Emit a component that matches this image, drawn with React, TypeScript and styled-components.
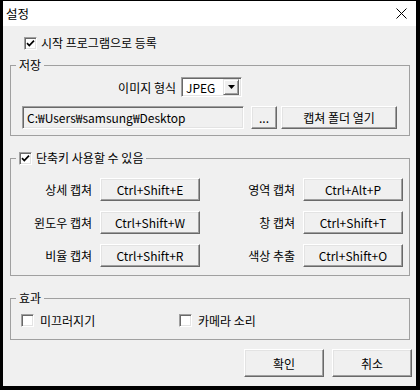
import React from 'react';
import styled, { createGlobalStyle } from 'styled-components';

const GlobalStyle = createGlobalStyle`
  html, body {
    margin: 0;
    padding: 0;
    background: #000;
  }
  body {
    font-family: "Noto Sans CJK KR", "Noto Sans", sans-serif;
    font-size: 12px;
    color: #000;
  }
  * {
    box-sizing: border-box;
  }
`;

const Window = styled.div`
  width: 420px;
  height: 390px;
  display: flex;
  flex-direction: column;
  background: #f0f0f0;
  border-style: solid;
  border-color: #000;
  border-width: 1px 4px 4px 3px;
`;

const TitleBar = styled.div`
  height: 25px;
  flex-shrink: 0;
  background: #fff;
  display: flex;
  align-items: center;
  justify-content: space-between;
  padding: 0 9px 0 3px;
  line-height: 14px;
  font-size: 12.5px;
`;

const Client = styled.div`
  flex: 1;
  display: flex;
  flex-direction: column;
  padding: 10px 6px 0 7px;
`;

const CheckRow = styled.label`
  display: flex;
  align-items: center;
  gap: 4px;
  height: 14px;
  line-height: 14px;
  padding-left: 14px;
`;

const Box = styled.span`
  width: 13px;
  height: 13px;
  flex-shrink: 0;
  display: inline-flex;
  align-items: center;
  justify-content: center;
  background: #fff;
  border: 1px solid;
  border-color: #a0a0a0 #fff #fff #a0a0a0;
  box-shadow: inset 1px 1px #696969, inset -1px -1px #e3e3e3;
`;

const Group = styled.fieldset<{ $top: number }>`
  margin: ${(p) => p.$top}px 0 0 0;
  padding: 0;
  min-width: 0;
  border: 1px solid #a0a0a0;
`;

const Legend = styled.legend`
  margin-left: 5px;
  padding: 0 3px;
  line-height: 14px;
  height: 14px;
  display: flex;
  align-items: center;
  gap: 4px;
`;

const FormatRow = styled.div`
  display: flex;
  align-items: center;
  margin-top: 5px;
`;

const FormatLabel = styled.span`
  width: 165px;
  margin-right: 5px;
  text-align: right;
`;

const Select = styled.div`
  width: 61px;
  height: 20px;
  display: flex;
  align-items: center;
  justify-content: space-between;
  background: #fff;
  border: 1px solid;
  border-color: #a0a0a0 #fff #fff #a0a0a0;
  box-shadow: inset 1px 1px #696969, inset -1px -1px #e3e3e3;
  padding: 2px 2px 2px 4px;
`;

const SelectArrow = styled.span`
  width: 16px;
  height: 16px;
  display: flex;
  align-items: center;
  justify-content: center;
  background: #f0f0f0;
  border: 1px solid;
  border-color: #e3e3e3 #696969 #696969 #e3e3e3;
  box-shadow: inset 1px 1px #fff, inset -1px -1px #a0a0a0;
`;

const PathRow = styled.div`
  display: flex;
  align-items: center;
  gap: 4px;
  margin-top: 9px;
  padding: 0 0 6px 11px;
`;

const PathBox = styled.div`
  width: 222px;
  height: 23px;
  display: flex;
  align-items: center;
  padding-left: 4px;
  margin-right: 3px;
  background: #f0f0f0;
  border: 1px solid;
  border-color: #a0a0a0 #fff #fff #a0a0a0;
  box-shadow: inset 1px 1px #696969, inset -1px -1px #e3e3e3;
  white-space: nowrap;
`;

const Button = styled.button<{ $w: number; $h?: number }>`
  width: ${(p) => p.$w}px;
  height: ${(p) => p.$h ?? 23}px;
  flex-shrink: 0;
  margin: 0;
  padding: 0;
  font: inherit;
  color: #000;
  background: #f0f0f0;
  border: 1px solid;
  border-color: #fff #696969 #696969 #fff;
  box-shadow: inset -1px -1px #a0a0a0, inset 1px 1px #e3e3e3;
  white-space: nowrap;
`;

const HotkeyGrid = styled.div`
  display: grid;
  grid-template-columns: 189px 203px;
  row-gap: 10px;
  padding: 13px 0 8px 0;
`;

const HotkeyCell = styled.div`
  display: flex;
  align-items: center;
  justify-content: flex-end;
  gap: 8px;
`;

const EffectRow = styled.div`
  display: grid;
  grid-template-columns: 158px auto;
  padding: 9px 0 12px 10px;
`;

const EffectItem = styled.label`
  display: flex;
  align-items: center;
  gap: 6px;
  height: 13px;
  line-height: 14px;
`;

const Footer = styled.div`
  display: flex;
  justify-content: flex-end;
  gap: 8px;
  margin: 9px -2px 0 0;
`;

function CheckBox({ checked }: { checked?: boolean }) {
  return (
    <Box>
      {checked && (
        <svg width="9" height="9" viewBox="0 0 9 9">
          <path d="M1 4.2 L3.3 6.6 L8 1.6" fill="none" stroke="#000" strokeWidth="1.7" />
        </svg>
      )}
    </Box>
  );
}

const hotkeys: [string, string][] = [
  ['상세 캡쳐', 'Ctrl+Shift+E'],
  ['영역 캡쳐', 'Ctrl+Alt+P'],
  ['윈도우 캡쳐', 'Ctrl+Shift+W'],
  ['창 캡쳐', 'Ctrl+Shift+T'],
  ['비율 캡쳐', 'Ctrl+Shift+R'],
  ['색상 추출', 'Ctrl+Shift+O'],
];

export default function App() {
  return (
    <>
      <GlobalStyle />
      <Window>
        <TitleBar>
          <span>설정</span>
          <svg width="11" height="11" viewBox="0 0 11 11">
            <path d="M0.5 0.5 L10.5 10.5 M10.5 0.5 L0.5 10.5" stroke="#000" strokeWidth="1" />
          </svg>
        </TitleBar>
        <Client>
          <CheckRow>
            <CheckBox checked />
            <span>시작 프로그램으로 등록</span>
          </CheckRow>

          <Group $top={8}>
            <Legend>저장</Legend>
            <FormatRow>
              <FormatLabel>이미지 형식</FormatLabel>
              <Select>
                <span>JPEG</span>
                <SelectArrow>
                  <svg width="7" height="4" viewBox="0 0 7 4">
                    <path d="M0 0 H7 L3.5 4 Z" fill="#000" />
                  </svg>
                </SelectArrow>
              </Select>
            </FormatRow>
            <PathRow>
              <PathBox>C:₩Users₩samsung₩Desktop</PathBox>
              <Button $w={26}>...</Button>
              <Button $w={116}>캡쳐 폴더 열기</Button>
            </PathRow>
          </Group>

          <Group $top={15}>
            <Legend>
              <CheckBox checked />
              <span>단축키 사용할 수 있음</span>
            </Legend>
            <HotkeyGrid>
              {hotkeys.map(([label, key]) => (
                <HotkeyCell key={label}>
                  <span>{label}</span>
                  <Button $w={100}>{key}</Button>
                </HotkeyCell>
              ))}
            </HotkeyGrid>
          </Group>

          <Group $top={15}>
            <Legend>효과</Legend>
            <EffectRow>
              <EffectItem>
                <CheckBox />
                <span>미끄러지기</span>
              </EffectItem>
              <EffectItem>
                <CheckBox />
                <span>카메라 소리</span>
              </EffectItem>
            </EffectRow>
          </Group>

          <Footer>
            <Button $w={80} $h={28}>확인</Button>
            <Button $w={80} $h={28}>취소</Button>
          </Footer>
        </Client>
      </Window>
    </>
  );
}
